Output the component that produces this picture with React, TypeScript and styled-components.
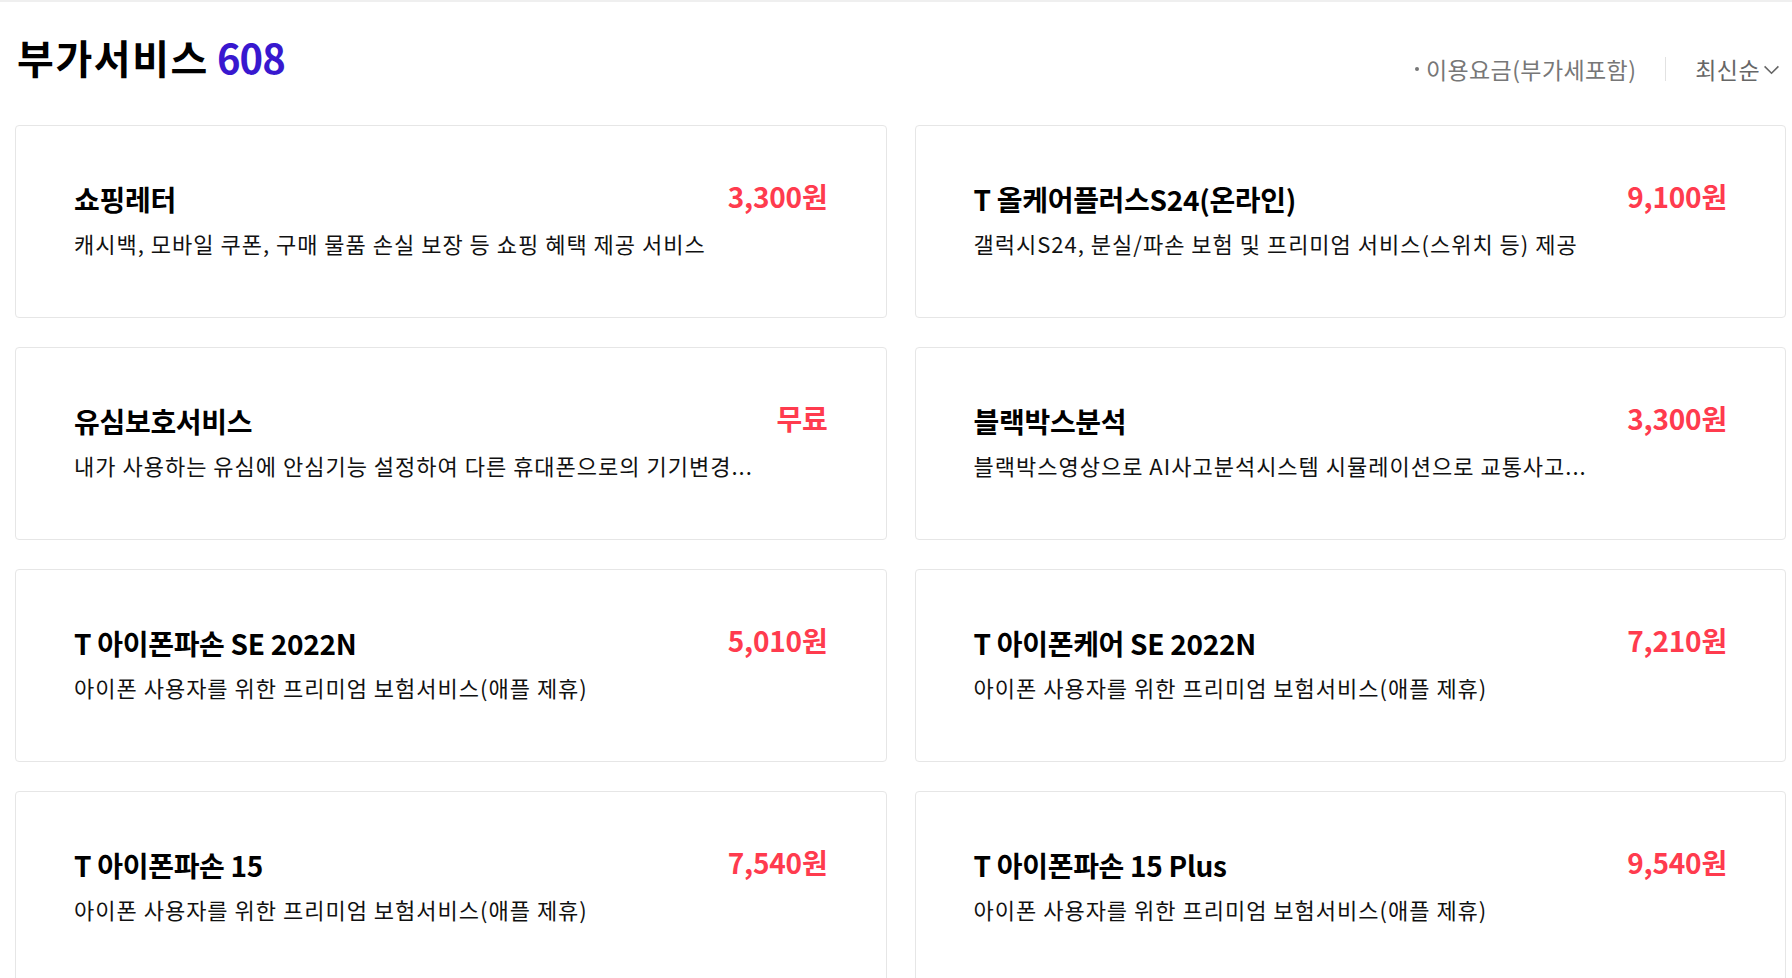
import React from 'react';
import styled, { createGlobalStyle } from 'styled-components';

const GlobalStyle = createGlobalStyle`
  html, body {
    margin: 0;
    padding: 0;
    background: #fff;
  }
  body {
    font-family: "Noto Sans CJK KR", "Noto Sans", sans-serif;
    color: #000;
  }
`;

const Page = styled.div`
  border-top: 2px solid #efefef;
  padding: 0 6px 0 15px;
`;

const Header = styled.div`
  display: flex;
  align-items: flex-start;
  justify-content: space-between;
  height: 123px;
`;

const Title = styled.h2`
  margin: 26px 0 0 2px;
  font-size: 40px;
  line-height: 58px;
  font-weight: 700;
  letter-spacing: 1.6px;
  color: #000;
`;

const Count = styled.span`
  color: #3818cf;
  margin-left: 8px;
  letter-spacing: -1px;
`;

const Options = styled.div`
  display: flex;
  align-items: center;
  margin: 51px 6px 0 0;
  color: #777;
  font-size: 23px;
  line-height: 32px;
`;

const Notice = styled.span`
  display: flex;
  align-items: center;
  letter-spacing: 0.4px;
  &::before {
    content: '';
    width: 4px;
    height: 4px;
    border-radius: 50%;
    background: #777;
    margin-right: 7px;
  }
`;

const Divider = styled.span`
  width: 1px;
  height: 24px;
  background: #e2e2e2;
  margin: 0 29px 0 29px;
`;

const Sort = styled.button`
  display: flex;
  align-items: center;
  gap: 3px;
  border: 0;
  background: none;
  padding: 0;
  font: inherit;
  color: #666;
  letter-spacing: 0.4px;
  cursor: pointer;
`;

const Grid = styled.div`
  display: grid;
  grid-template-columns: 1fr 1fr;
  column-gap: 28px;
  row-gap: 29px;
`;

const Card = styled.div`
  height: 193px;
  box-sizing: border-box;
  border: 1.5px solid #e6e6e6;
  border-radius: 4px;
  padding: 0 58px 4px;
  display: flex;
  flex-direction: column;
  justify-content: center;
`;

const Row = styled.div`
  display: flex;
  justify-content: space-between;
  align-items: flex-start;
`;

const Name = styled.div`
  font-size: 28px;
  line-height: 36px;
  font-weight: 700;
  letter-spacing: -0.3px;
  color: #000;
`;

const Price = styled.div`
  font-size: 28px;
  line-height: 36px;
  font-weight: 700;
  letter-spacing: -0.2px;
  color: #ff3b4e;
  margin-top: -3px;
`;

const Desc = styled.div`
  margin-top: 11px;
  font-size: 22px;
  line-height: 30px;
  letter-spacing: 1px;
  color: #111;
  white-space: nowrap;
  overflow: hidden;
  text-overflow: ellipsis;
`;

const Chevron = () => (
  <svg width="17" height="17" viewBox="0 0 16 16" fill="none">
    <path d="M1.5 5 L8 11.5 L14.5 5" stroke="#666" strokeWidth="1.5" />
  </svg>
);

const services = [
  { name: '쇼핑레터', price: '3,300원', desc: '캐시백, 모바일 쿠폰, 구매 물품 손실 보장 등 쇼핑 혜택 제공 서비스' },
  { name: 'T 올케어플러스S24(온라인)', price: '9,100원', desc: '갤럭시S24, 분실/파손 보험 및 프리미엄 서비스(스위치 등) 제공' },
  { name: '유심보호서비스', price: '무료', desc: '내가 사용하는 유심에 안심기능 설정하여 다른 휴대폰으로의 기기변경...' },
  { name: '블랙박스분석', price: '3,300원', desc: '블랙박스영상으로 AI사고분석시스템 시뮬레이션으로 교통사고...' },
  { name: 'T 아이폰파손 SE 2022N', price: '5,010원', desc: '아이폰 사용자를 위한 프리미엄 보험서비스(애플 제휴)' },
  { name: 'T 아이폰케어 SE 2022N', price: '7,210원', desc: '아이폰 사용자를 위한 프리미엄 보험서비스(애플 제휴)' },
  { name: 'T 아이폰파손 15', price: '7,540원', desc: '아이폰 사용자를 위한 프리미엄 보험서비스(애플 제휴)' },
  { name: 'T 아이폰파손 15 Plus', price: '9,540원', desc: '아이폰 사용자를 위한 프리미엄 보험서비스(애플 제휴)' },
];

export default function App() {
  return (
    <>
      <GlobalStyle />
      <Page>
        <Header>
          <Title>
            부가서비스<Count>608</Count>
          </Title>
          <Options>
            <Notice>이용요금(부가세포함)</Notice>
            <Divider />
            <Sort>
              최신순
              <Chevron />
            </Sort>
          </Options>
        </Header>
        <Grid>
          {services.map((s) => (
            <Card key={s.name}>
              <Row>
                <Name>{s.name}</Name>
                <Price>{s.price}</Price>
              </Row>
              <Desc>{s.desc}</Desc>
            </Card>
          ))}
        </Grid>
      </Page>
    </>
  );
}
